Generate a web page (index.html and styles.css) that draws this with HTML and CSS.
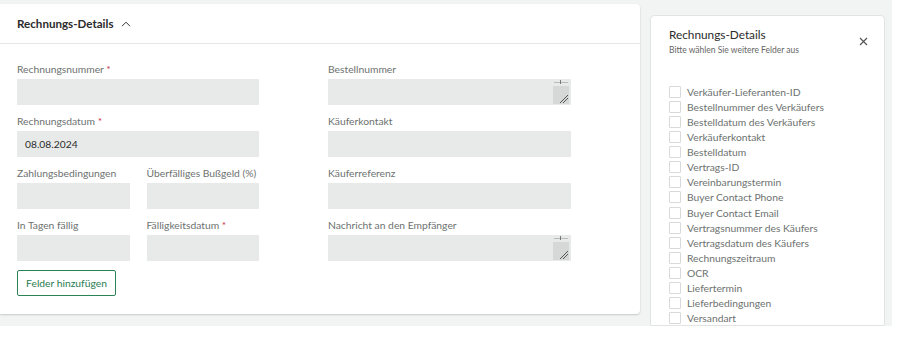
FILE: index.html
```html
<!DOCTYPE html>
<html lang="de">
<head>
    <meta charset="UTF-8">
    <meta name="viewport" content="width=device-width, initial-scale=1.0">
    <title>Rechnungs-Details</title>
    <link rel="stylesheet" href="styles.css">
</head>
<body>
    <div class="page">
        <div class="card">
            <div class="card-header">
                <span class="card-title">Rechnungs-Details</span>
                <svg class="chevron" width="10" height="6" viewBox="0 0 10 6"><path d="M1 5.2 L5 1.2 L9 5.2" fill="none" stroke="#333" stroke-width="1"/></svg>
            </div>
            <div class="form">
                <div class="col">
                    <div class="field">
                        <label>Rechnungsnummer <span class="req">*</span></label>
                        <div class="input"></div>
                    </div>
                    <div class="field">
                        <label>Rechnungsdatum <span class="req">*</span></label>
                        <div class="input">08.08.2024</div>
                    </div>
                    <div class="pair">
                        <div class="field">
                            <label>Zahlungsbedingungen</label>
                            <div class="input"></div>
                        </div>
                        <div class="field">
                            <label>Überfälliges Bußgeld (%)</label>
                            <div class="input"></div>
                        </div>
                    </div>
                    <div class="pair">
                        <div class="field">
                            <label>In Tagen fällig</label>
                            <div class="input"></div>
                        </div>
                        <div class="field">
                            <label>Fälligkeitsdatum <span class="req">*</span></label>
                            <div class="input"></div>
                        </div>
                    </div>
                    <button class="add-btn">Felder hinzufügen</button>
                </div>
                <div class="col wide">
                    <div class="field">
                        <label>Bestellnummer</label>
                        <div class="input textarea"><span class="grip"></span></div>
                    </div>
                    <div class="field">
                        <label>Käuferkontakt</label>
                        <div class="input"></div>
                    </div>
                    <div class="field">
                        <label>Käuferreferenz</label>
                        <div class="input"></div>
                    </div>
                    <div class="field">
                        <label>Nachricht an den Empfänger</label>
                        <div class="input textarea"><span class="grip"></span></div>
                    </div>
                </div>
            </div>
        </div>

        <div class="panel">
            <div class="panel-head">
                <div>
                    <div class="panel-title">Rechnungs-Details</div>
                    <div class="panel-sub">Bitte wählen Sie weitere Felder aus</div>
                </div>
                <svg class="close" width="9" height="9" viewBox="0 0 9 9"><path d="M1 1 L8 8 M8 1 L1 8" stroke="#555" stroke-width="1.2"/></svg>
            </div>
            <ul class="options">
                <li><span class="box"></span>Verkäufer-Lieferanten-ID</li>
                <li><span class="box"></span>Bestellnummer des Verkäufers</li>
                <li><span class="box"></span>Bestelldatum des Verkäufers</li>
                <li><span class="box"></span>Verkäuferkontakt</li>
                <li><span class="box"></span>Bestelldatum</li>
                <li><span class="box"></span>Vertrags-ID</li>
                <li><span class="box"></span>Vereinbarungstermin</li>
                <li><span class="box"></span>Buyer Contact Phone</li>
                <li><span class="box"></span>Buyer Contact Email</li>
                <li><span class="box"></span>Vertragsnummer des Käufers</li>
                <li><span class="box"></span>Vertragsdatum des Käufers</li>
                <li><span class="box"></span>Rechnungszeitraum</li>
                <li><span class="box"></span>OCR</li>
                <li><span class="box"></span>Liefertermin</li>
                <li><span class="box"></span>Lieferbedingungen</li>
                <li><span class="box"></span>Versandart</li>
            </ul>
        </div>
    </div>
</body>
</html>
```

FILE: styles.css
```css
body {
    margin: 0;
    background: #fff;
    font-family: Lato, "Open Sans", Arial, sans-serif;
    color: #333;
}
.page {
    width: 892px;
    height: 326px;
    background: #f2f3f3;
    display: flex;
    gap: 10px;
    overflow: hidden;
}
.card {
    width: 640px;
    height: 310px;
    margin-top: 4px;
    background: #fff;
    border-radius: 0 4px 4px 0;
    box-shadow: 0 1px 2px rgba(0, 0, 0, 0.18);
    box-sizing: border-box;
}
.card-header {
    height: 40px;
    border-bottom: 1px solid #e6e8e8;
    padding-left: 17px;
    display: flex;
    align-items: center;
    gap: 7px;
    box-sizing: border-box;
}
.card-title {
    font-size: 11.6px;
    font-weight: 700;
    color: #2b2b2b;
}
.chevron {
    margin-top: 1px;
}
.form {
    display: flex;
    gap: 69px;
    padding: 18px 0 0 17px;
}
.col {
    width: 242px;
    display: flex;
    flex-direction: column;
    gap: 9px;
}
.col.wide {
    width: 243px;
}
.field {
    min-width: 0;
}
.field label {
    display: block;
    font-size: 10.3px;
    line-height: 14px;
    height: 14px;
    color: #6d7270;
    margin-bottom: 3px;
    white-space: nowrap;
}
.req {
    color: #c8354f;
}
.input {
    height: 26px;
    background: #e8eaea;
    font-size: 10.3px;
    line-height: 26px;
    padding-left: 8px;
    color: #2b2b2b;
    position: relative;
}
.pair {
    display: flex;
    gap: 17px;
}
.pair .field {
    flex: 1 1 0;
}
.grip {
    position: absolute;
    right: 2px;
    bottom: 1px;
    width: 16px;
    height: 18px;
    background:
        linear-gradient(135deg, transparent 60%, #555 60%, #555 66%, transparent 66%, transparent 74%, #555 74%, #555 80%, transparent 80%) no-repeat 4px 6px / 11px 11px,
        #d6d8d8;
}
.grip::before {
    content: '';
    position: absolute;
    left: 1px;
    right: 1px;
    top: -4px;
    height: 1px;
    background: #b9bbbb;
}
.grip::after {
    content: '';
    position: absolute;
    left: 7px;
    top: -6px;
    width: 1px;
    height: 4px;
    background: #777;
}
.add-btn {
    align-self: flex-start;
    width: 99px;
    height: 26px;
    border: 1px solid #2a8456;
    border-radius: 2px;
    background: #fff;
    color: #2a7d52;
    font-family: inherit;
    font-size: 10.3px;
    padding: 0;
}
.panel {
    width: 235px;
    margin-top: 15px;
    background: #fff;
    border: 1px solid #e2e4e4;
    border-radius: 4px 4px 0 0;
    box-sizing: border-box;
    padding: 11px 16px 0 18px;
}
.panel-head {
    display: flex;
    justify-content: space-between;
    align-items: flex-start;
}
.panel-title {
    font-size: 11.8px;
    font-weight: 400;
    color: #2b2b2b;
    line-height: 16px;
}
.panel-sub {
    font-size: 8.5px;
    color: #666;
    line-height: 12px;
    margin-top: 1px;
}
.close {
    margin-top: 10px;
}
.options {
    list-style: none;
    margin: 28px 0 0 0;
    padding: 0;
}
.options li {
    display: flex;
    align-items: center;
    height: 15.13px;
    font-size: 10.3px;
    color: #6d7270;
    white-space: nowrap;
}
.box {
    width: 10px;
    height: 10px;
    border: 1px solid #d8dada;
    border-radius: 1px;
    margin-right: 6px;
    flex: none;
}
```
